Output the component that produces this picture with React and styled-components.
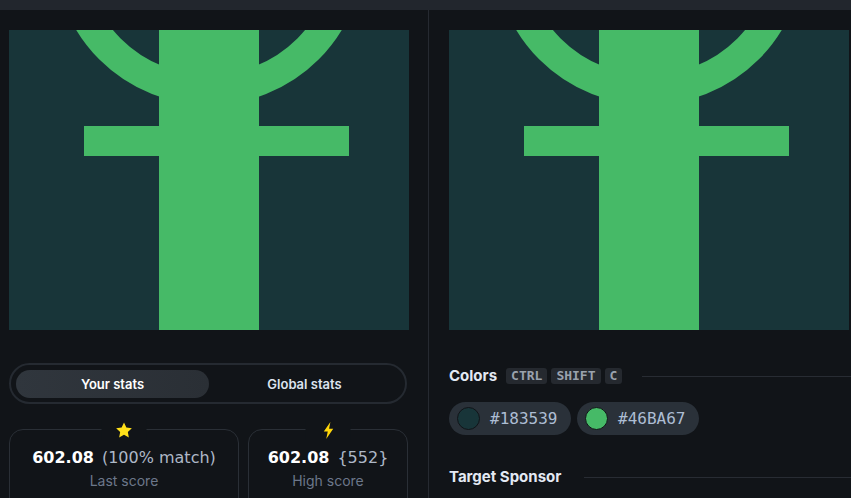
import React from "react";
import styled, { createGlobalStyle } from "styled-components";

const GlobalStyle = createGlobalStyle`
  html, body {
    margin: 0;
    padding: 0;
    background: #111418;
    font-family: Inter, "Noto Sans", sans-serif;
    color: #e6ebf2;
    overflow: hidden;
  }
`;

const Page = styled.div`
  width: 851px;
  height: 498px;
  display: flex;
  flex-direction: column;
  overflow: hidden;
`;

const TopBar = styled.div`
  height: 10px;
  flex: none;
  background: #22262d;
`;

const Columns = styled.div`
  flex: 1;
  display: grid;
  grid-template-columns: 428px 1px 1fr;
  min-height: 0;
`;

const Divider = styled.div`
  background: #262a31;
`;

const Column = styled.div`
  display: flex;
  flex-direction: column;
  padding: 20px 0 0 ${(p) => p.$left}px;
  min-width: 0;
  overflow: hidden;

  & > * {
    flex: none;
  }
`;

const Canvas = styled.svg`
  display: block;
  width: 400px;
  height: 300px;
`;

const Toggle = styled.div`
  margin-top: 33px;
  width: 398px;
  height: 41px;
  box-sizing: border-box;
  border: 2px solid #252a31;
  border-radius: 21px;
  display: grid;
  grid-template-columns: 193px 1fr;
  align-items: center;
  padding: 0 5px;
`;

const Tab = styled.div`
  height: 28px;
  border-radius: 14px;
  display: flex;
  align-items: center;
  justify-content: center;
  font-size: 13px;
  font-weight: 600;
  color: ${(p) => (p.$active ? "#ffffff" : "#dce3ee")};
  background: ${(p) =>
    p.$active ? "linear-gradient(90deg, #30363d, #2a2f35)" : "transparent"};
`;

const Cards = styled.div`
  margin-top: 25px;
  display: flex;
  gap: 9px;
`;

const Card = styled.div`
  position: relative;
  width: ${(p) => p.$w}px;
  height: 90px;
  box-sizing: border-box;
  border: 1.5px solid #2a2f36;
  border-radius: 14px;
  display: flex;
  flex-direction: column;
  align-items: center;
  padding-top: 18px;
`;

const Badge = styled.div`
  position: absolute;
  top: -10px;
  left: 50%;
  transform: translateX(-50%);
  width: 45px;
  height: 20px;
  background: #111418;
  display: flex;
  align-items: center;
  justify-content: center;
`;

const ValueRow = styled.div`
  display: flex;
  gap: 8px;
  font-family: "DejaVu Sans", sans-serif;
  font-size: 16px;
  line-height: 20px;
`;

const Value = styled.span`
  font-weight: 700;
  color: #ffffff;
`;

const Extra = styled.span`
  color: #aeb8c7;
`;

const Label = styled.div`
  margin-top: 4px;
  font-size: 14px;
  color: #6c778a;
`;

const SectionHead = styled.div`
  display: flex;
  align-items: center;
  gap: 4px;
  height: 16px;
  margin-top: ${(p) => p.$top}px;
`;

const HeadText = styled.span`
  font-size: 15px;
  line-height: 16px;
  font-weight: 700;
  color: #e3e9f3;
  margin-right: 5px;
`;

const Kbd = styled.span`
  height: 16px;
  padding: 0 5px;
  border-radius: 3px;
  background: #25292f;
  color: #9aa2ad;
  font-family: "DejaVu Sans Mono", monospace;
  font-weight: 700;
  font-size: 13px;
  line-height: 16px;
`;

const Rule = styled.div`
  flex: 1;
  height: 1px;
  background: #282c33;
  margin-left: ${(p) => p.$gap}px;
`;

const Chips = styled.div`
  display: flex;
  gap: 6px;
  margin-top: 18px;
`;

const Chip = styled.div`
  height: 33px;
  width: 122px;
  box-sizing: border-box;
  border-radius: 17px;
  background: #2a3139;
  display: flex;
  align-items: center;
  padding-left: 8px;
  gap: 10px;
`;

const Swatch = styled.span`
  width: 23px;
  height: 23px;
  box-sizing: border-box;
  border-radius: 50%;
  border: 1.5px solid #111418;
  background: ${(p) => p.$c};
`;

const Hex = styled.span`
  font-family: "DejaVu Sans Mono", monospace;
  font-size: 16px;
  color: #adbdd3;
`;

const Target = () => (
  <Canvas viewBox="0 0 400 300">
    <rect width="400" height="300" fill="#183539" />
    <circle cx="200" cy="-80" r="140" fill="none" stroke="#46BA67" strokeWidth="30" />
    <rect x="150" y="0" width="100" height="300" fill="#46BA67" />
    <rect x="75" y="96" width="265" height="30" fill="#46BA67" />
  </Canvas>
);

const Star = () => (
  <svg width="17" height="16" viewBox="0 0 24 23">
    <path
      d="M12 0.8l3.4 7.2 7.9 1-5.8 5.4 1.5 7.8L12 18.4 5 22.2l1.5-7.8L0.7 9l7.9-1z"
      fill="#ffe01a"
    />
  </svg>
);

const Bolt = () => (
  <svg width="12" height="17" viewBox="0 0 12 18">
    <path d="M8 0L1 10h4.2L3.6 18 11 7.2H6.6L8 0z" fill="#ffd60a" />
  </svg>
);

export default function App() {
  return (
    <Page>
      <GlobalStyle />
      <TopBar />
      <Columns>
        <Column $left={9}>
          <Target />
          <Toggle>
            <Tab $active>Your stats</Tab>
            <Tab>Global stats</Tab>
          </Toggle>
          <Cards>
            <Card $w={230}>
              <Badge>
                <Star />
              </Badge>
              <ValueRow>
                <Value>602.08</Value>
                <Extra>(100% match)</Extra>
              </ValueRow>
              <Label>Last score</Label>
            </Card>
            <Card $w={160}>
              <Badge>
                <Bolt />
              </Badge>
              <ValueRow>
                <Value>602.08</Value>
                <Extra>{"{552}"}</Extra>
              </ValueRow>
              <Label>High score</Label>
            </Card>
          </Cards>
        </Column>
        <Divider />
        <Column $left={20}>
          <Target />
          <SectionHead $top={38}>
            <HeadText>Colors</HeadText>
            <Kbd>CTRL</Kbd>
            <Kbd>SHIFT</Kbd>
            <Kbd>C</Kbd>
            <Rule $gap={16} />
          </SectionHead>
          <Chips>
            <Chip>
              <Swatch $c="#183539" />
              <Hex>#183539</Hex>
            </Chip>
            <Chip>
              <Swatch $c="#46BA67" />
              <Hex>#46BA67</Hex>
            </Chip>
          </Chips>
          <SectionHead $top={34}>
            <HeadText>Target Sponsor</HeadText>
            <Rule $gap={14} />
          </SectionHead>
        </Column>
      </Columns>
    </Page>
  );
}
